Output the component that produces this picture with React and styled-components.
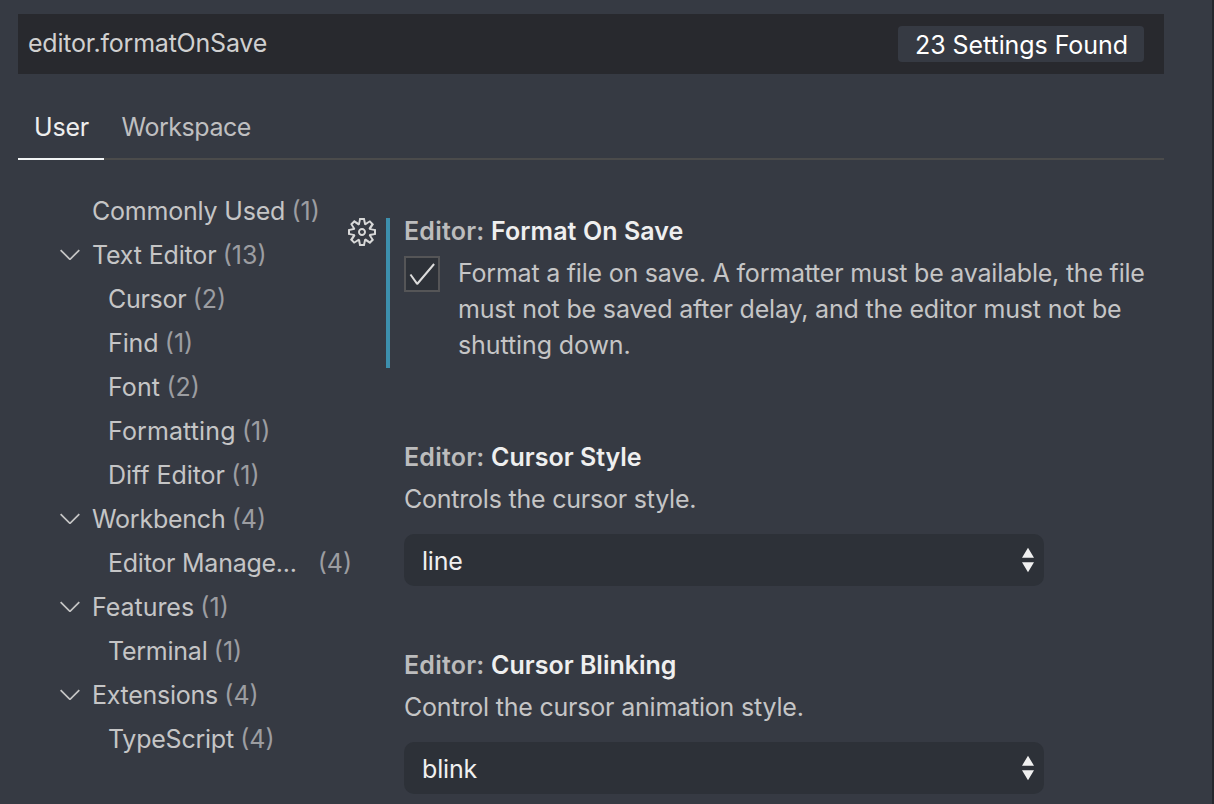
import React from 'react';
import styled, { createGlobalStyle } from 'styled-components';

const GlobalStyle = createGlobalStyle`
  * { box-sizing: border-box; }
  body {
    margin: 0;
    background: #363a43;
    font-family: Inter, "Liberation Sans", sans-serif;
    font-size: 25px;
    color: #c5c5c6;
    overflow: hidden;
  }
`;

const Page = styled.main`
  width: 1214px;
  height: 804px;
  overflow: hidden;
  padding: 14px 48px 0 18px;
  background: #363a43;
  border-right: 2px solid #25272d;
`;

const Label = styled.span`
  white-space: pre;
  letter-spacing: ${(p) => p.$track || 0}px;
`;

const SearchBar = styled.div`
  display: flex;
  align-items: center;
  justify-content: space-between;
  height: 60px;
  padding: 0 20px 0 10px;
  background: #28292e;
  color: #d0d0d0;
`;

const Query = styled(Label)`
  margin-top: -2px;
`;

const Badge = styled.div`
  display: flex;
  align-items: center;
  justify-content: center;
  width: 246px;
  height: 36px;
  padding: 1px 0 0 1px;
  border-radius: 4px;
  background: #363a43;
  color: #fff;
`;

const Tabs = styled.nav`
  display: flex;
  height: 64px;
  margin-top: 22px;
  border-bottom: 2px solid #4b4b4b;
`;

const Tab = styled.div`
  height: 64px;
  width: ${(p) => p.$width}px;
  padding: 0 0 0 ${(p) => p.$inset}px;
  line-height: 62px;
  color: ${(p) => (p.$active ? '#eeeeee' : '#bfbfc0')};
  border-bottom: 2px solid ${(p) => (p.$active ? '#f2f4f5' : 'transparent')};
`;

const Body = styled.div`
  display: flex;
  padding-top: 29px;
`;

const Tree = styled.div`
  width: 328px;
  flex: none;
`;

const Row = styled.div`
  display: flex;
  align-items: center;
  height: 44px;
  padding-left: ${(p) => (p.$child ? 90 : 36)}px;
`;

const Twistie = styled.span`
  display: flex;
  width: 38px;
  height: 32px;
  margin-top: -2px;
  flex: none;
`;

const Count = styled.span`
  margin-left: ${(p) => p.$gap || 6.3}px;
  color: #9c9da1;
`;

const Settings = styled.div`
  flex: 1;
  min-width: 0;
  padding-top: 29px;
`;

const Setting = styled.section`
  display: flex;
  height: ${(p) => p.$height}px;
  margin-bottom: ${(p) => p.$after || 0}px;
`;

const Gutter = styled.div`
  width: 40px;
  flex: none;
  margin-top: -2px;
`;

const Content = styled.div`
  flex: 1;
  min-width: 0;
  padding-left: 14px;
  border-left: 4px solid ${(p) => (p.$modified ? '#3d8fad' : 'transparent')};
`;

const Title = styled.h3`
  margin: 0;
  font-size: 25px;
  font-weight: 600;
  line-height: 26px;
  color: #bcbcbd;
  white-space: pre;
`;

const Name = styled(Label)`
  color: #efefef;
`;

const CheckRow = styled.div`
  display: flex;
  gap: 18px;
  margin-top: 12px;
`;

const Checkbox = styled.div`
  display: flex;
  width: 36px;
  height: 36px;
  flex: none;
  border: 2px solid #555557;
  background: #2d3138;
`;

const Description = styled.div`
  display: flex;
  flex-direction: column;
  margin-top: -1px;
  line-height: 36px;
`;

const Hint = styled.div`
  margin-top: 11px;
  line-height: 36px;
`;

const Select = styled.div`
  display: flex;
  align-items: center;
  justify-content: space-between;
  width: 640px;
  height: 52px;
  margin-top: 17px;
  padding: 1px 10px 0 18px;
  border-radius: 10px;
  background: #2d3138;
  color: #f0f0f0;
`;

const ArrowIcon = styled.svg`
  display: block;
  margin-top: -1px;
`;

const Chevron = () => (
  <svg width="32" height="32" viewBox="0 0 16 16" fill="#c5c5c5">
    <path d="M7.976 10.072l4.357-4.357.62.618L8.284 11h-.618L3 6.333l.619-.618 4.357 4.357z" />
  </svg>
);

const Gear = () => (
  <svg width="32" height="32" viewBox="0 0 16 16" fill="#d8d8d8">
    <path
      fillRule="evenodd"
      d="M9.1 4.4L8.6 2H7.4l-.5 2.4-.7.3-2-1.3-.9.8 1.3 2-.2.7-2.4.5v1.2l2.4.5.3.8-1.3 2 .8.8 2-1.3.8.3.4 2.3h1.2l.5-2.4.8-.3 2 1.3.8-.8-1.3-2 .3-.8 2.3-.4V7.4l-2.4-.5-.3-.8 1.3-2-.8-.8-2 1.3-.7-.2zM9.4 1l.5 2.4L12 2.1l2 2-1.4 2.1 2.4.4v2.8l-2.4.5L14 12l-2 2-2.1-1.4-.5 2.4H6.6l-.5-2.4L4 13.9l-2-2 1.4-2.1L1 9.4V6.6l2.4-.5L2.1 4l2-2 2.1 1.4.4-2.4h2.8zm.6 7c0 1.1-.9 2-2 2s-2-.9-2-2 .9-2 2-2 2 .9 2 2zM8 9c.6 0 1-.4 1-1s-.4-1-1-1-1 .4-1 1 .4 1 1 1z"
    />
  </svg>
);

const Check = () => (
  <svg width="32" height="32" viewBox="0 0 16 16" fill="#dcdcdc">
    <path d="M14.431 3.323l-8.47 10-.79-.036-3.35-4.77.818-.574 2.978 4.24 8.051-9.506.764.646z" />
  </svg>
);

const Arrows = () => (
  <ArrowIcon width="12" height="26" viewBox="0 0 12 26" fill="#f0f0f0">
    <path d="M6 0.7L12 10.7H0zM6 25.3L0 15.3H12z" />
  </ArrowIcon>
);

const tree = [
  { name: 'Commonly Used', count: 1, track: -0.2 },
  { name: 'Text Editor', count: 13, open: true, track: -0.17 },
  { name: 'Cursor', count: 2, child: true, track: -0.28 },
  { name: 'Find', count: 1, child: true, track: -0.1 },
  { name: 'Font', count: 2, child: true, track: 0.1 },
  { name: 'Formatting', count: 1, child: true, track: 0.12 },
  { name: 'Diff Editor', count: 1, child: true, track: -0.05 },
  { name: 'Workbench', count: 4, open: true, track: -0.24 },
  { name: 'Editor Manage...', count: 4, child: true, gap: 21, track: -0.25 },
  { name: 'Features', count: 1, open: true, track: -0.04 },
  { name: 'Terminal', count: 1, child: true, track: -0.24 },
  { name: 'Extensions', count: 4, open: true, track: -0.27 },
  { name: 'TypeScript', count: 4, child: true, track: -0.23 },
];

export default function App() {
  return (
    <>
      <GlobalStyle />
      <Page>
        <SearchBar>
          <Query $track={-0.21}>editor.formatOnSave</Query>
          <Badge><Label $track={-0.07}>23 Settings Found</Label></Badge>
        </SearchBar>
        <Tabs>
          <Tab $active $width={86} $inset={16}><Label $track={-0.2}>User</Label></Tab>
          <Tab $width={170} $inset={17.5}><Label $track={-0.45}>Workspace</Label></Tab>
        </Tabs>
        <Body>
          <Tree>
            {tree.map((t) => (
              <Row key={t.name} $child={t.child}>
                {!t.child && <Twistie>{t.open && <Chevron />}</Twistie>}
                <Label $track={t.track}>{t.name}</Label>
                <Count $gap={t.gap}>({t.count})</Count>
              </Row>
            ))}
          </Tree>
          <Settings>
            <Setting $height={150} $after={76}>
              <Gutter><Gear /></Gutter>
              <Content $modified>
                <Title><Label $track={0.22}>Editor: </Label><Name $track={0.08}>Format On Save</Name></Title>
                <CheckRow>
                  <Checkbox><Check /></Checkbox>
                  <Description>
                    <Label $track={-0.22}>Format a file on save. A formatter must be available, the file</Label>
                    <Label $track={-0.175}>must not be saved after delay, and the editor must not be</Label>
                    <Label $track={-0.1}>shutting down.</Label>
                  </Description>
                </CheckRow>
              </Content>
            </Setting>
            <Setting $height={208}>
              <Gutter />
              <Content>
                <Title><Label $track={0.22}>Editor: </Label><Name>Cursor Style</Name></Title>
                <Hint><Label $track={-0.22}>Controls the cursor style.</Label></Hint>
                <Select><Label $track={-0.2}>line</Label><Arrows /></Select>
              </Content>
            </Setting>
            <Setting $height={150}>
              <Gutter />
              <Content>
                <Title><Label $track={0.22}>Editor: </Label><Name>Cursor Blinking</Name></Title>
                <Hint><Label $track={-0.2}>Control the cursor animation style.</Label></Hint>
                <Select><Label $track={-0.15}>blink</Label><Arrows /></Select>
              </Content>
            </Setting>
          </Settings>
        </Body>
      </Page>
    </>
  );
}
